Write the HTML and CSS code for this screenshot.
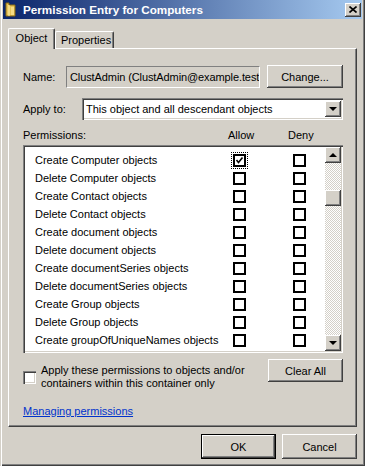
FILE: index.html
```html
<!DOCTYPE html>
<html lang="en">
<head>
  <meta charset="UTF-8">
  <title>Permission Entry for Computers</title>
  <link rel="stylesheet" href="styles.css">
</head>
<body>

<div class="window">

  <!-- Title bar -->
  <div class="titlebar">
    <svg class="title-icon" width="11" height="15" viewBox="0 0 11 15">
      <path d="M1 1 L4 1 L4 3 L10 3 L10 14 L1 14 Z" fill="#e8c45a" stroke="#8a6a10" stroke-width="1"/>
      <path d="M4 3 L4 14" stroke="#fff2b0" stroke-width="1"/>
      <path d="M6 5 L9 5 L9 13 L6 13 Z" fill="#f6dc84"/>
    </svg>
    <span class="title-text">Permission Entry for Computers</span>
    <div class="close-btn">
      <svg width="8" height="7" viewBox="0 0 8 7">
        <path d="M0.5 0.5 L7.5 6.5 M7.5 0.5 L0.5 6.5" stroke="#000" stroke-width="1.6"/>
      </svg>
    </div>
  </div>

  <div class="content">
    <!-- Tabs -->
    <div class="tabs">
      <div class="tab active">Object</div>
      <div class="tab">Properties</div>
    </div>

    <div class="panel">
      <div class="row name-row">
        <span class="label name-label">Name:</span>
        <div class="readonly-field">ClustAdmin (ClustAdmin@example.test</div>
        <div class="btn change-btn">Change...</div>
      </div>

      <div class="row apply-row">
        <span class="label apply-label">Apply to:</span>
        <div class="combo">
          <span class="combo-text">This object and all descendant objects</span>
          <div class="scroll-btn combo-arrow"><span class="arrow down"></span></div>
        </div>
      </div>

      <div class="perm-header">
        <span class="perm-title">Permissions:</span>
        <span class="col-allow">Allow</span>
        <span class="col-deny">Deny</span>
      </div>

      <div class="perm-list">
        <div class="perm-rows" id="permRows"></div>
        <div class="scrollbar">
          <div class="scroll-btn"><span class="arrow up"></span></div>
          <div class="scroll-track">
            <div class="scroll-thumb"></div>
          </div>
          <div class="scroll-btn"><span class="arrow down"></span></div>
        </div>
      </div>

      <div class="options-row">
        <div class="apply-check">
          <span class="sunken-cb"></span>
          <span class="apply-text">Apply these permissions to objects and/or<br>containers within this container only</span>
        </div>
        <div class="btn clear-btn">Clear All</div>
      </div>

      <a href="#" class="help-link">Managing permissions</a>
    </div>

    <div class="footer">
      <div class="btn default-btn">OK</div>
      <div class="btn">Cancel</div>
    </div>
  </div>
</div>

<script>
  // Permission rows shown in the list (last one is scrolled mostly out of view)
  const permissions = [
    "Create Computer objects",
    "Delete Computer objects",
    "Create Contact objects",
    "Delete Contact objects",
    "Create document objects",
    "Delete document objects",
    "Create documentSeries objects",
    "Delete documentSeries objects",
    "Create Group objects",
    "Delete Group objects",
    "Create groupOfUniqueNames objects",
    ""
  ];

  const rows = document.getElementById("permRows");
  permissions.forEach((name, i) => {
    const row = document.createElement("div");
    row.className = "perm-row";
    const allow = i === 0
      ? '<span class="cb checked focus"><svg width="9" height="9" viewBox="0 0 9 9"><path d="M1.5 4 L3.5 6.5 L7.5 1.5" fill="none" stroke="#000" stroke-width="1.6"/></svg></span>'
      : '<span class="cb"></span>';
    row.innerHTML = `
      <span class="perm-name">${name}</span>
      <span class="perm-cell">${allow}</span>
      <span class="perm-cell"><span class="cb"></span></span>
    `;
    rows.appendChild(row);
  });
</script>

</body>
</html>
```

FILE: styles.css
```css
body {
  margin: 0;
  font-family: "Liberation Sans", Arial, sans-serif;
  font-size: 11px;
  color: #000;
  background: #d4d0c8;
}

.window {
  width: 365px;
  height: 466px;
  box-sizing: border-box;
  padding: 0 3px 3px 3px;
  background: #d4d0c8;
  box-shadow: inset 1px 0 #d4d0c8, inset 2px 0 #fff,
              inset -1px -1px #404040, inset -2px -2px #808080;
  display: flex;
  flex-direction: column;
}

/* Title bar */
.titlebar {
  height: 19px;
  background: linear-gradient(to right, #0a246a, #a6caf0);
  display: flex;
  align-items: center;
  color: #fff;
}

.title-icon {
  margin-left: 2px;
  margin-right: 7px;
}

.title-text {
  font-weight: bold;
  font-size: 11.7px;
  flex: 1;
}

.close-btn {
  width: 16px;
  height: 14px;
  box-sizing: border-box;
  margin-right: 1px;
  background: #d4d0c8;
  box-shadow: inset -1px -1px #404040, inset 1px 1px #fff, inset -2px -2px #808080;
  display: flex;
  align-items: center;
  justify-content: center;
}

.content {
  flex: 1;
  padding: 9px 5px 0 5px;
  display: flex;
  flex-direction: column;
}

/* Tabs */
.tabs {
  display: flex;
  align-items: flex-end;
  height: 20px;
}

.tab {
  height: 17px;
  box-sizing: border-box;
  padding: 0 5px;
  width: 59px;
  border-top: 1px solid #fff;
  border-left: 1px solid #fff;
  border-right: 1px solid #404040;
  box-shadow: inset -1px 0 #808080;
  border-radius: 2px 2px 0 0;
  line-height: 16px;
  text-align: center;
}

.tab.active {
  width: 47px;
  height: 21px;
  margin-bottom: -1px;
  position: relative;
  z-index: 1;
  background: #d4d0c8;
  line-height: 18px;
}

/* Tab page */
.panel {
  height: 379px;
  box-sizing: border-box;
  border-top: 1px solid #fff;
  border-left: 1px solid #fff;
  border-right: 1px solid #404040;
  border-bottom: 1px solid #404040;
  box-shadow: inset -1px -1px #808080;
  padding: 16px 12px 0 14px;
  display: flex;
  flex-direction: column;
}

.row {
  display: flex;
  align-items: center;
  height: 23px;
}

.label {
  flex: none;
}

.name-label {
  width: 43px;
}

.apply-label {
  width: 59px;
}

.readonly-field {
  width: 194px;
  height: 22px;
  box-sizing: border-box;
  border-top: 1px solid #808080;
  border-left: 1px solid #808080;
  border-right: 1px solid #fff;
  border-bottom: 1px solid #fff;
  padding-left: 3px;
  line-height: 20px;
  letter-spacing: -0.1px;
  white-space: nowrap;
  overflow: hidden;
}

.btn {
  width: 75px;
  height: 23px;
  box-sizing: border-box;
  background: #d4d0c8;
  box-shadow: inset -1px -1px #404040, inset 1px 1px #fff, inset -2px -2px #808080;
  display: flex;
  align-items: center;
  justify-content: center;
}

.change-btn {
  width: 76px;
  margin-left: 7px;
}

.apply-row {
  margin-top: 9px;
}

.combo {
  width: 261px;
  height: 22px;
  box-sizing: border-box;
  background: #fff;
  box-shadow: inset 1px 1px #808080, inset 2px 2px #404040, inset -1px -1px #fff, inset -2px -2px #d4d0c8;
  padding: 2px;
  display: flex;
  align-items: center;
}

.combo-text {
  flex: 1;
  padding-left: 2px;
}

.combo-arrow {
  height: 18px;
}

/* Permissions list */
.perm-header {
  display: flex;
  margin-top: 8px;
  height: 15px;
  line-height: 15px;
}

.perm-title {
  width: 205px;
}

.col-allow {
  width: 60px;
}

.col-deny {
  width: 40px;
}

.perm-list {
  margin-top: 2px;
  width: 320px;
  height: 208px;
  box-sizing: border-box;
  background: #fff;
  box-shadow: inset 1px 1px #808080, inset 2px 2px #404040, inset -1px -1px #fff, inset -2px -2px #d4d0c8;
  padding: 2px;
  display: flex;
}

.perm-rows {
  flex: 1;
  padding-top: 4px;
  overflow: hidden;
}

.perm-row {
  display: grid;
  grid-template-columns: 208px 60px 1fr;
  height: 18px;
  align-items: center;
}

.perm-name {
  padding-left: 10px;
  white-space: nowrap;
}

.perm-cell {
  display: flex;
}

.cb {
  width: 13px;
  height: 13px;
  box-sizing: border-box;
  border: 2px solid #000;
  background: #fff;
  display: flex;
  align-items: center;
  justify-content: center;
}

.cb.focus {
  outline: 1px dotted #000;
  outline-offset: 1px;
}

.scrollbar {
  width: 16px;
  display: flex;
  flex-direction: column;
}

.scroll-btn {
  width: 16px;
  height: 16px;
  box-sizing: border-box;
  flex: none;
  background: #d4d0c8;
  box-shadow: inset -1px -1px #404040, inset 1px 1px #fff, inset -2px -2px #808080;
  display: flex;
  align-items: center;
  justify-content: center;
}

.arrow {
  width: 0;
  height: 0;
  border-left: 4px solid transparent;
  border-right: 4px solid transparent;
}

.arrow.up {
  border-bottom: 4px solid #000;
}

.arrow.down {
  border-top: 4px solid #000;
}

.scroll-track {
  flex: 1;
  background: repeating-conic-gradient(#fff 0 25%, #d4d0c8 0 50%) 0 0 / 2px 2px;
  padding-top: 27px;
}

.scroll-thumb {
  height: 16px;
  background: #d4d0c8;
  box-shadow: inset -1px -1px #404040, inset 1px 1px #fff, inset -2px -2px #808080;
}

/* Options under the list */
.options-row {
  display: flex;
  justify-content: space-between;
  margin-top: 6px;
}

.apply-check {
  display: flex;
  align-items: center;
  gap: 5px;
  margin-top: 5px;
}

.sunken-cb {
  width: 13px;
  height: 13px;
  box-sizing: border-box;
  background: #fff;
  box-shadow: inset 1px 1px #808080, inset 2px 2px #404040, inset -1px -1px #fff, inset -2px -2px #d4d0c8;
}

.apply-text {
  line-height: 13px;
}

.clear-btn {
  margin-right: 1px;
}

.help-link {
  margin-top: 15px;
  color: #0033cc;
  text-decoration: underline;
  align-self: flex-start;
}

/* Dialog buttons */
.footer {
  display: flex;
  justify-content: flex-end;
  gap: 6px;
  margin-top: 7px;
}

.footer .btn {
  height: 25px;
}

.default-btn {
  box-shadow: inset 0 0 0 1px #000, inset -2px -2px #404040, inset 2px 2px #fff, inset -3px -3px #808080;
}
```
